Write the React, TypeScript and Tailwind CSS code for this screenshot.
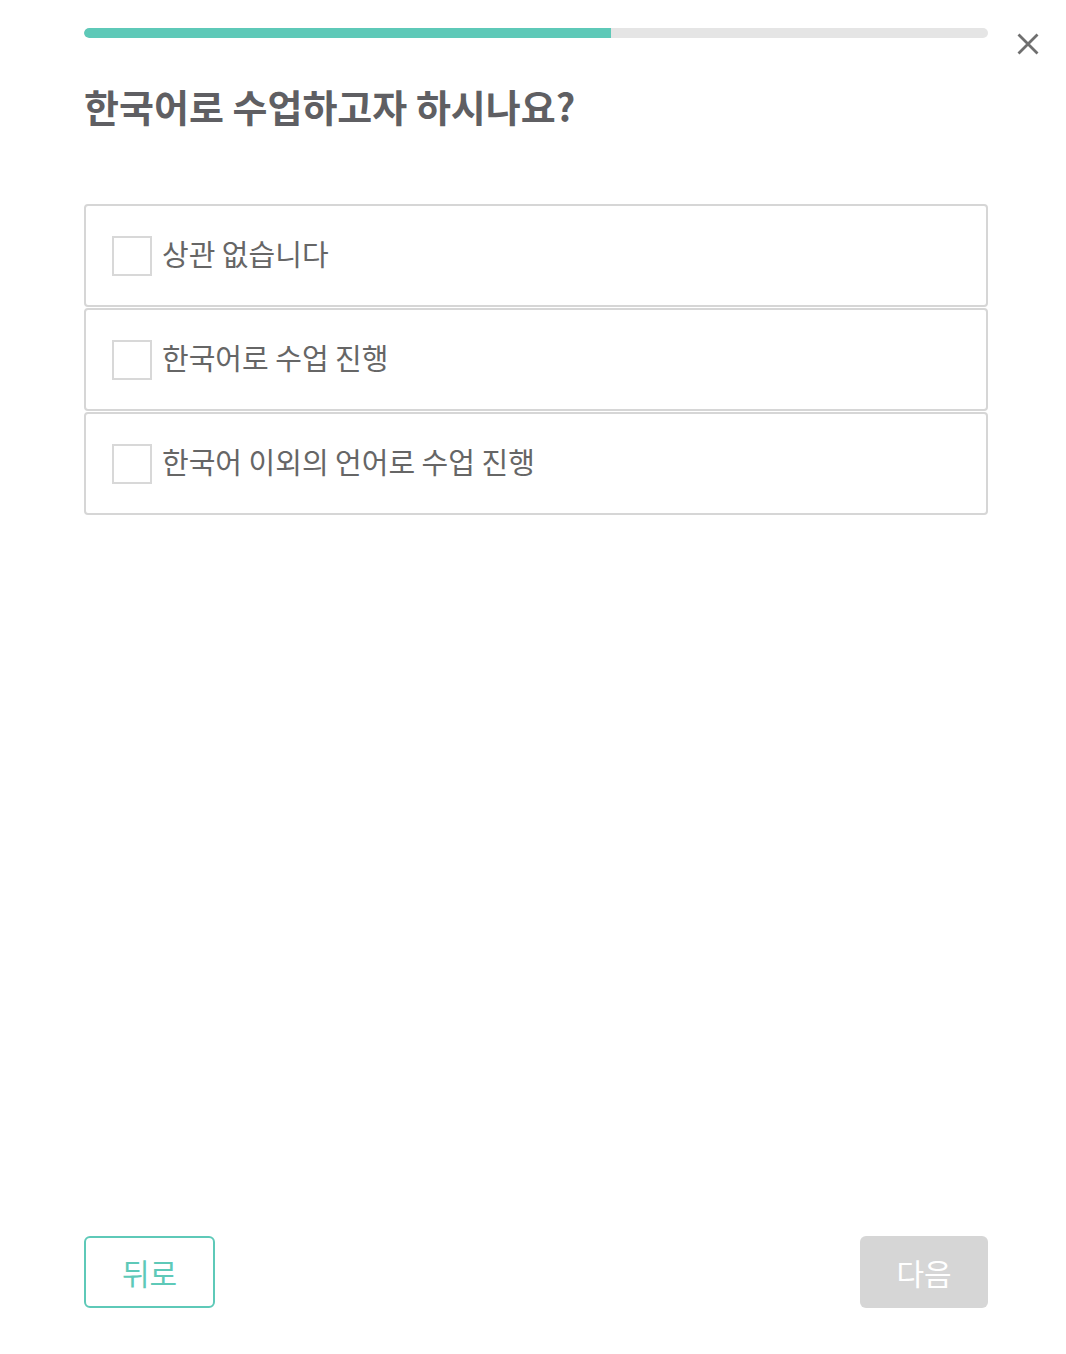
import { useState } from "react";

const options = ["상관 없습니다", "한국어로 수업 진행", "한국어 이외의 언어로 수업 진행"];

export default function App() {
    const [checked, setChecked] = useState<number[]>([]);
    const toggle = (i: number) =>
        setChecked((c) => (c.includes(i) ? c.filter((x) => x !== i) : [...c, i]));

    return (
        <main
            className="min-h-screen bg-white flex flex-col justify-between pb-[46px]"
            style={{ fontFamily: '"Noto Sans CJK KR", "Noto Sans", sans-serif' }}
        >
            <div>
                <div className="flex items-start pt-[28px]">
                    <div className="ml-[84px] w-[904px] h-[10px] rounded-full bg-[#e5e5e5] overflow-hidden">
                        <div className="h-full w-[58.3%] rounded-l-full bg-[#5ec9b8]" />
                    </div>
                    <button className="ml-[28px] mt-[4px] w-[24px] h-[24px] flex items-center justify-center text-[#6f6f6f]">
                        <svg width="22" height="22" viewBox="0 0 22 22" fill="none" stroke="currentColor" strokeWidth="2.8">
                            <path d="M1.5 1.5 L20.5 20.5 M20.5 1.5 L1.5 20.5" />
                        </svg>
                    </button>
                </div>

                <div className="mx-[84px] w-[904px]">
                    <h1 className="mt-[30px] text-[38px] leading-[40px] font-bold text-[#5f5f63]">
                        한국어로 수업하고자 하시나요?
                    </h1>

                    <div className="mt-[78px] flex flex-col gap-[1px]">
                        {options.map((o, i) => (
                            <label
                                key={o}
                                onClick={() => toggle(i)}
                                className="h-[103px] border-2 border-[#d6d6d6] rounded-[4px] flex items-center pl-[26px] gap-[10px] cursor-pointer"
                            >
                                <span className="w-[40px] h-[40px] border-2 border-[#d8d8d8] flex items-center justify-center">
                                    {checked.includes(i) && <span className="w-[20px] h-[20px] bg-[#5ec9b8]" />}
                                </span>
                                <span className="text-[29px] text-[#666666] -mt-[4px]">{o}</span>
                            </label>
                        ))}
                    </div>
                </div>
            </div>

            <div className="mx-[84px] w-[904px] flex justify-between">
                <button className="w-[131px] h-[72px] border-2 border-[#5ec9b8] rounded-[6px] text-[30px] text-[#5ec9b8]">
                    뒤로
                </button>
                <button className="w-[128px] h-[72px] rounded-[6px] bg-[#d6d6d6] text-[30px] text-white">
                    다음
                </button>
            </div>
        </main>
    );
}
